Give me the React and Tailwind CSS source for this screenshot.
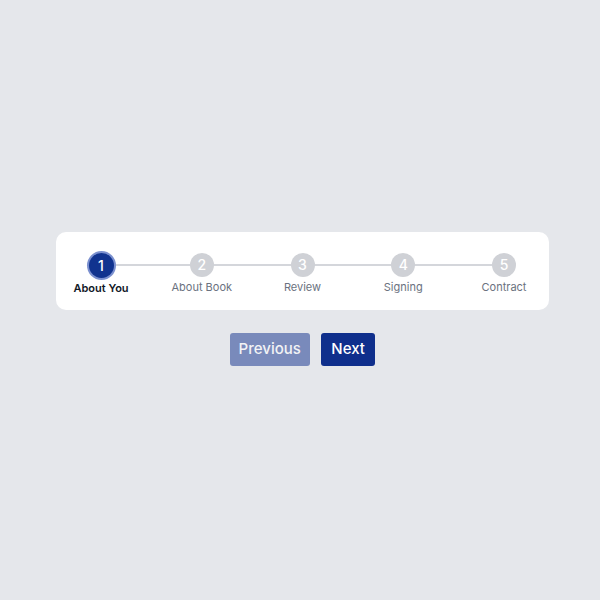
const steps = ['About You', 'About Book', 'Review', 'Signing', 'Contract'];

function Step({ index, label, active }) {
    return (
        <div className="w-[100.75px] shrink-0 flex flex-col items-center relative z-10">
            <div
                className={
                    active
                        ? 'w-[25px] h-[25px] rounded-full bg-[#11338f] ring-2 ring-[#7b90cf] flex items-center justify-center text-white text-[14px] font-medium'
                        : 'w-[24px] h-[24px] rounded-full bg-[#cfd1d6] flex items-center justify-center text-white text-[14px] font-medium'
                }
            >
                {index + 1}
            </div>
            <span
                className={
                    active
                        ? 'mt-[3px] text-[11px] leading-[14px] font-semibold text-[#111827]'
                        : 'mt-[3px] text-[11px] leading-[14px] text-[#6b7280]'
                }
            >
                {label}
            </span>
        </div>
    );
}

export default function App() {
    const current = 0;

    return (
        <div
            className="w-full min-h-screen bg-[#e5e7eb] flex flex-col items-center justify-center pl-[5px] pb-[3px]"
            style={{ fontFamily: 'Inter, "Noto Sans", sans-serif' }}
        >
            <div className="w-[493px] bg-white rounded-[10px] pt-[21px] pb-[15px] flex justify-center">
                <div className="relative flex">
                    <div className="absolute left-[50px] right-[50px] top-[11px] h-[2px] bg-[#d4d6db]" />
                    {steps.map((label, i) => (
                        <Step key={label} index={i} label={label} active={i === current} />
                    ))}
                </div>
            </div>

            <div className="mt-[23px] flex gap-[11px]">
                <button
                    type="button"
                    disabled
                    className="h-[33px] px-[9px] rounded-[3px] bg-[#0f2f8c] opacity-50 text-white text-[15px] font-medium"
                >
                    Previous
                </button>
                <button
                    type="button"
                    className="h-[33px] px-[10.5px] rounded-[3px] bg-[#0f2f8c] text-white text-[15px] font-medium"
                >
                    Next
                </button>
            </div>
        </div>
    );
}
